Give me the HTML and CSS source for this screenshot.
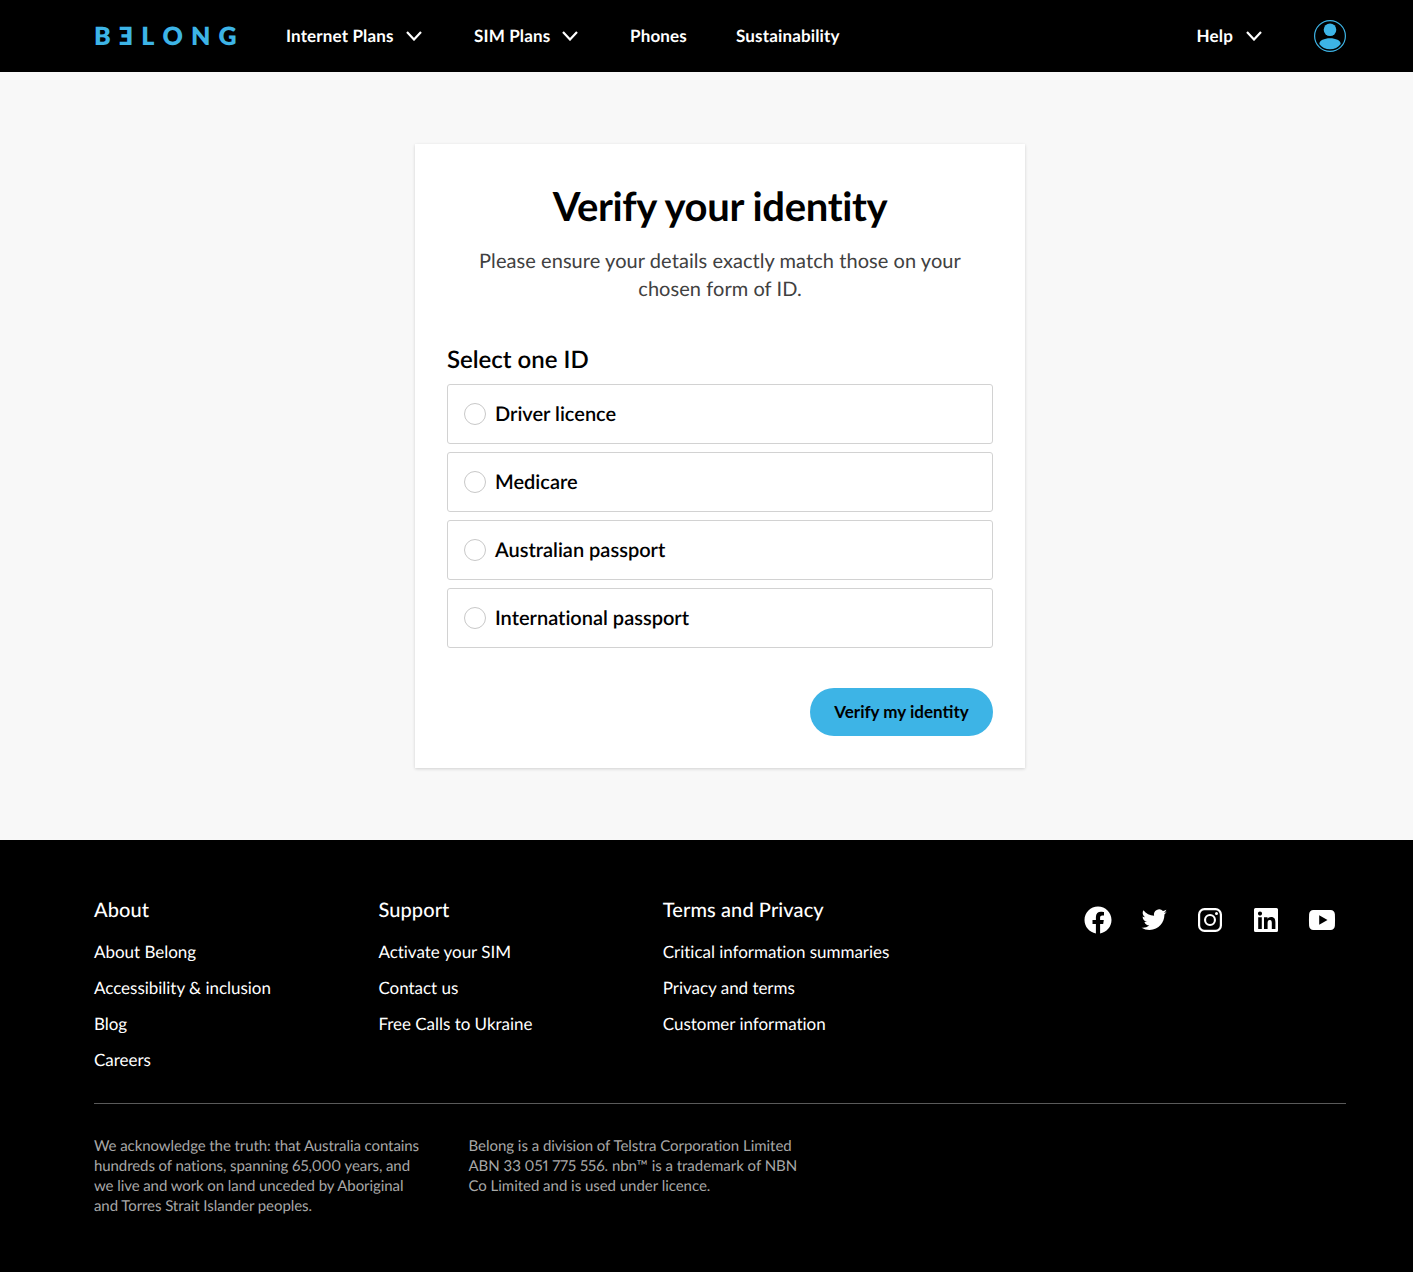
FILE: index.html
```html
<!DOCTYPE html>
<html lang="en">
<head>
    <meta charset="UTF-8">
    <title>Verify your identity</title>
    <meta name="viewport" content="width=device-width">
    <link rel="stylesheet" href="styles.css">
</head>

<body>

<header class="topbar">
    <a class="logo" href="#"><span>B</span><span class="logo-e">E</span><span>L</span><span>O</span><span>N</span><span>G</span></a>
    <nav class="mainnav">
        <a class="navitem nav-internet" href="#"><span class="navtext">Internet Plans</span>
            <svg class="chevron" viewBox="0 0 16 10"><path d="M1 1l7 7.500L15 1"/></svg>
        </a>
        <a class="navitem nav-sim" href="#"><span class="navtext">SIM Plans</span>
            <svg class="chevron" viewBox="0 0 16 10"><path d="M1 1l7 7.500L15 1"/></svg>
        </a>
        <a class="navitem nav-phones" href="#"><span class="navtext">Phones</span></a>
        <a class="navitem" href="#"><span class="navtext">Sustainability</span></a>
    </nav>
    <a class="navitem nav-help" href="#"><span class="navtext">Help</span>
        <svg class="chevron" viewBox="0 0 16 10"><path d="M1 1l7 7.500L15 1"/></svg>
    </a>
    <a class="avatar" href="#">
        <svg viewBox="0 0 32 32">
            <circle class="avatar-ring" cx="16" cy="16" r="15.4"/>
            <circle class="avatar-fill" cx="16" cy="9.8" r="6.300"/>
            <path class="avatar-fill" d="M5.300 24c0-3.500 5-5.700 10.700-5.700s10.700 2.200 10.700 5.700c-2.400 3.300-6.300 5.300-10.700 5.300S7.700 27.300 5.300 24z"/>
        </svg>
    </a>
</header>

<main class="content">
    <form class="card">
        <h1 class="card-title">Verify your identity</h1>
        <p class="card-intro">Please ensure your details exactly match those on your chosen form of ID.</p>

        <h2 class="select-title">Select one ID</h2>
        <div class="options">
            <label class="option"><span class="radio"></span><span class="option-text">Driver licence</span></label>
            <label class="option"><span class="radio"></span><span class="option-text">Medicare</span></label>
            <label class="option"><span class="radio"></span><span class="option-text">Australian passport</span></label>
            <label class="option"><span class="radio"></span><span class="option-text">International passport</span></label>
        </div>

        <div class="actions">
            <button class="btn-verify" type="button">Verify my identity</button>
        </div>
    </form>
</main>

<footer class="footer">
    <div class="footer-top">
        <div class="footcol">
            <h3>About</h3>
            <a href="#">About Belong</a>
            <a href="#">Accessibility &amp; inclusion</a>
            <a href="#">Blog</a>
            <a href="#">Careers</a>
        </div>
        <div class="footcol">
            <h3>Support</h3>
            <a href="#">Activate your SIM</a>
            <a href="#">Contact us</a>
            <a href="#">Free Calls to Ukraine</a>
        </div>
        <div class="footcol">
            <h3>Terms and Privacy</h3>
            <a href="#">Critical information summaries</a>
            <a href="#">Privacy and terms</a>
            <a href="#">Customer information</a>
        </div>
        <div class="social">
            <a href="#"><svg viewBox="0 0 28 28"><path d="M27.500 14C27.500 6.500 21.500.5 14 .5S.5 6.500.5 14c0 6.800 4.900 12.400 11.400 13.400v-9.500H8.500V14h3.400v-3c0-3.400 2-5.200 5.100-5.200 1.500 0 3 .3 3 .3v3.300h-1.700c-1.700 0-2.200 1-2.200 2.100V14h3.700l-.6 3.900h-3.100v9.500C22.600 26.400 27.500 20.800 27.500 14z"/></svg></a>
            <a href="#"><svg viewBox="0 0 28 28"><path d="M27 5.900c-.9.400-1.900.7-3 .8 1.100-.6 1.900-1.700 2.300-2.900-1 .6-2.100 1-3.300 1.300a5.200 5.200 0 0 0-8.900 4.700C9.800 9.600 6 7.500 3.400 4.300a5.200 5.200 0 0 0 1.600 7c-.9 0-1.700-.3-2.400-.7v.1c0 2.500 1.800 4.600 4.200 5.100-.8.200-1.600.2-2.400.1.700 2.100 2.600 3.600 4.900 3.600a10.500 10.500 0 0 1-7.800 2.200 14.800 14.800 0 0 0 8 2.300c9.600 0 14.900-8 14.900-14.900v-.7c1-.7 1.900-1.700 2.600-2.800z"/></svg></a>
            <a href="#"><svg viewBox="0 0 28 28"><path fill-rule="evenodd" d="M8.500 2h11A6.500 6.500 0 0 1 26 8.500v11a6.500 6.500 0 0 1-6.500 6.500h-11A6.500 6.500 0 0 1 2 19.500v-11A6.500 6.500 0 0 1 8.500 2zm0 2.200a4.300 4.300 0 0 0-4.300 4.300v11a4.300 4.300 0 0 0 4.300 4.300h11a4.300 4.300 0 0 0 4.300-4.300v-11a4.300 4.300 0 0 0-4.300-4.300h-11zM14 8a6 6 0 1 1 0 12 6 6 0 0 1 0-12zm0 2.100a3.900 3.900 0 1 0 0 7.800 3.900 3.900 0 0 0 0-7.800zM20.500 6a1.500 1.500 0 1 1 0 3 1.500 1.500 0 0 1 0-3z"/></svg></a>
            <a href="#"><svg viewBox="0 0 28 28"><path fill-rule="evenodd" d="M3.500 2h21A1.500 1.500 0 0 1 26 3.500v21a1.500 1.500 0 0 1-1.500 1.500h-21A1.500 1.500 0 0 1 2 24.500v-21A1.500 1.500 0 0 1 3.500 2zm2.700 9.200V23h3.600V11.200H6.200zM8 5.500a2.100 2.100 0 1 0 0 4.200 2.100 2.100 0 0 0 0-4.200zM12 11.200V23h3.600v-5.800c0-1.600.3-3.100 2.200-3.100s2 1.800 2 3.200V23h3.600v-6.500c0-3.200-.7-5.600-4.400-5.600-1.800 0-3 1-3.500 1.900v-1.600H12z"/></svg></a>
            <a href="#"><svg viewBox="0 0 28 28"><path fill-rule="evenodd" d="M5.500 4h17c2.700 0 4.200 1.700 4.400 4.200.2 3.900.2 7.700 0 11.600-.2 2.500-1.700 4.200-4.400 4.200h-17c-2.700 0-4.200-1.700-4.400-4.200-.2-3.900-.2-7.700 0-11.600C1.300 5.700 2.800 4 5.500 4zM11.200 9.200v9.600l8.300-4.800-8.300-4.800z"/></svg></a>
        </div>
    </div>
    <div class="footer-legal">
        <p>We acknowledge the truth: that Australia contains hundreds of nations, spanning 65,000 years, and we live and work on land unceded by Aboriginal and Torres Strait Islander peoples.</p>
        <p class="legal-second">Belong is a division of Telstra Corporation Limited ABN 33 051 775 556. nbn™ is a trademark of NBN Co Limited and is used under licence.</p>
    </div>
</footer>

</body>
</html>
```

FILE: styles.css
```css
* {box-sizing: border-box;}

body {
    margin: 0;
    background: #f8f8f8;
    color: #000;
    font-family: "Lato", "Open Sans", sans-serif;
    font-variant-ligatures: none;
    text-rendering: geometricPrecision;
}

a {color: inherit; text-decoration: none;}

/* header */
.topbar {
    display: flex;
    align-items: center;
    height: 72px;
    padding: 0 67px 0 94px;
    background: #000;
    color: #fff;
}

.logo {
    display: flex;
    width: 192px;
    gap: 8.100px;
    color: #3db4e6;
    font-size: 25px;
    font-weight: 800;
    line-height: 1;
}

.logo-e {transform: scaleX(-1);}

.mainnav {display: flex; flex: 1;}

.navitem {
    display: flex;
    align-items: center;
    font-size: 17px;
    font-weight: 700;
    letter-spacing: .15px;
    white-space: nowrap;
}

.navtext {padding-bottom: 2px;}

.nav-internet {width: 188px;}
.nav-sim {width: 156px;}
.nav-phones {width: 106px;}
.nav-help {margin-right: 52px;}

.chevron {
    width: 16px;
    height: 10px;
    margin-left: 12px;
    fill: none;
    stroke: #fff;
    stroke-width: 2.2;
}

.nav-help .chevron {margin-left: 13px;}

.avatar {display: block; width: 32px; height: 32px;}
.avatar svg {display: block; width: 32px; height: 32px;}
.avatar-ring {fill: none; stroke: #3db4e6; stroke-width: 1.2;}
.avatar-fill {fill: #3db4e6;}

/* card */
.content {
    height: 768px;
    padding: 72px 0 0 415px;
}

.card {
    width: 610px;
    height: 624px;
    padding: 38px 32px 32px;
    background: #fff;
    box-shadow: 0 1px 3px rgba(0, 0, 0, .16);
}

.card-title {
    margin: 0;
    font-size: 40px;
    font-weight: 700;
    line-height: 48px;
    letter-spacing: -.35px;
    text-align: center;
}

.card-intro {
    width: 500px;
    margin: 17px auto 0;
    color: #414141;
    font-size: 20px;
    line-height: 28px;
    letter-spacing: .06px;
    text-align: center;
}

.select-title {
    margin: 41px 0 0;
    font-size: 24px;
    font-weight: 600;
    line-height: 32px;
}

.options {
    display: flex;
    flex-direction: column;
    gap: 8px;
    margin-top: 8px;
}

.option {
    display: flex;
    align-items: center;
    height: 60px;
    padding-left: 16px;
    border: 1px solid #d2d2d2;
    border-radius: 3px;
    font-size: 20px;
    font-weight: 600;
}

.option-text {padding-bottom: 1px;}

.radio {
    width: 22px;
    height: 22px;
    margin-right: 9px;
    border: 1px solid #c8c8c8;
    border-radius: 50%;
}

.actions {
    display: flex;
    justify-content: flex-end;
    margin-top: 40px;
}

.btn-verify {
    width: 183px;
    height: 48px;
    padding-bottom: 3px;
    border: 0;
    border-radius: 24px;
    background: #3db4e6;
    color: #000;
    font-family: inherit;
    font-size: 17px;
    font-weight: 700;
}

/* footer */
.footer {
    height: 432px;
    padding: 56px 67px 0 94px;
    background: #000;
    color: #fff;
}

.footer-top {
    display: flex;
    height: 208px;
    border-bottom: 1px solid #5a5a5a;
}

.footcol {width: 284.4px;}

.footcol h3 {
    margin: 0 0 10px;
    font-size: 20px;
    font-weight: 500;
    line-height: 28px;
    letter-spacing: .1px;
}

.footcol a {
    display: block;
    font-size: 17px;
    line-height: 36px;
    letter-spacing: -.03px;
}

.social {
    display: flex;
    gap: 28px;
    margin: 10px 0 0 137px;
}

.social a {width: 28px; height: 28px;}
.social svg {display: block; width: 28px; height: 28px; fill: #fff;}

.footer-legal {
    display: flex;
    gap: 43.500px;
    padding-top: 32px;
    color: #a8a8a8;
    font-size: 15px;
    line-height: 20px;
    letter-spacing: -.08px;
    font-variant-numeric: proportional-nums;
}

.footer-legal p {width: 331px; margin: 0;}
.footer-legal .legal-second {width: 345px; letter-spacing: -.03px;}
```
